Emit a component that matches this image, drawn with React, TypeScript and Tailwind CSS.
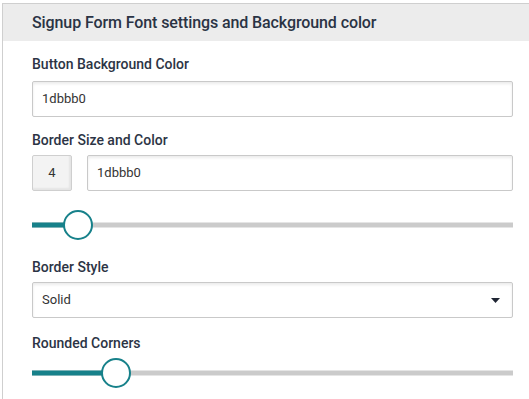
import React from 'react'

const font = { fontFamily: 'Roboto, "Liberation Sans", sans-serif' }

function Label({ children }: { children: React.ReactNode }) {
  return (
    <div className="text-[14px] font-medium leading-none text-[#2c3445]">
      {children}
    </div>
  )
}

function Field({ value, className = '' }: { value: string; className?: string }) {
  return (
    <div
      className={`flex h-[36px] items-center rounded-[2px] border border-[#c9c9c9] bg-white px-[9px] text-[13px] text-[#333] shadow-[inset_0_2px_3px_rgba(0,0,0,0.08)] ${className}`}
    >
      {value}
    </div>
  )
}

function Slider({ pos }: { pos: number }) {
  return (
    <div className="relative h-[30px] w-full">
      <div className="absolute left-0 right-0 top-1/2 h-[5px] -translate-y-1/2 bg-[#cbcbcb]" />
      <div
        className="absolute left-0 top-1/2 h-[5px] -translate-y-1/2 bg-[#17818a]"
        style={{ width: pos }}
      />
      <div
        className="absolute top-0 h-[30px] w-[30px] -translate-x-1/2 rounded-full border-2 border-[#17818a] bg-white"
        style={{ left: pos }}
      />
    </div>
  )
}

export default function App() {
  return (
    <div className="h-[399px] w-[529px] overflow-hidden bg-white pt-[3px]" style={font}>
      <div className="ml-[2px] h-[396px] border-l border-t border-[#cfcfcf]">
        {/* Header */}
        <div className="flex h-[37px] items-center bg-[#ececec] pl-[29px] text-[16px] font-medium tracking-[-0.1px] text-[#2a3344]">
          Signup Form Font settings and Background color
        </div>

        <div className="flex w-[510px] flex-col pl-[29px] pt-[16px]">
          <Label>Button Background Color</Label>
          <Field value="1dbbb0" className="mt-[10px]" />

          <div className="mt-[16px]">
            <Label>Border Size and Color</Label>
          </div>
          <div className="mt-[8px] flex gap-[15px]">
            <div className="flex h-[36px] w-[40px] items-center justify-center rounded-[2px] border border-[#cfcfcf] bg-[#f3f3f3] text-[13px] text-[#333] shadow-[inset_-2px_-2px_2px_rgba(0,0,0,0.06)]">
              4
            </div>
            <Field value="1dbbb0" className="flex-1" />
          </div>

          <div className="mt-[19px]">
            <Slider pos={46} />
          </div>

          <div className="mt-[20px]">
            <Label>Border Style</Label>
          </div>
          <div className="mt-[8px] flex h-[36px] items-center justify-between rounded-[2px] border border-[#c9c9c9] bg-white pl-[9px] pr-[12px] text-[13px] text-[#333] shadow-[inset_0_2px_3px_rgba(0,0,0,0.08)]">
            <span>Solid</span>
            <svg width="9" height="5" viewBox="0 0 9 5">
              <path d="M0 0h9L4.5 5z" fill="#1f2533" />
            </svg>
          </div>

          <div className="mt-[18px]">
            <Label>Rounded Corners</Label>
          </div>
          <div className="mt-[8px]">
            <Slider pos={84} />
          </div>
        </div>
      </div>
    </div>
  )
}
